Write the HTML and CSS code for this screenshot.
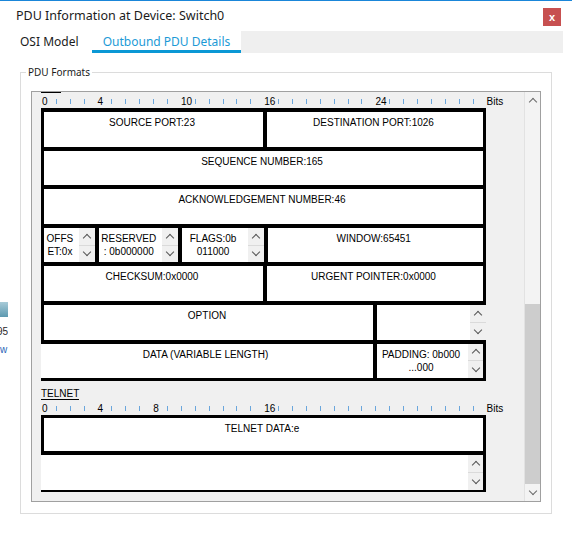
FILE: index.html
```html
<!DOCTYPE html>
<html lang="en">
<head>
    <meta charset="UTF-8">
    <meta name="viewport" content="width=device-width, initial-scale=1.0">
    <title>PDU Information at Device: Switch0</title>
    <link rel="stylesheet" href="styles.css">
</head>
<body>
    <!-- bit of the workspace showing behind the dialog -->
    <div class="behind">
        <div class="behind-icon"></div>
        <div class="behind-num">95</div>
        <div class="behind-link">w</div>
    </div>

    <div class="window">
        <div class="titlebar">
            <span class="title">PDU Information at Device: Switch0</span>
            <button class="close">x</button>
        </div>

        <div class="tabs">
            <div class="tab">OSI Model</div>
            <div class="tab active">Outbound PDU Details</div>
            <div class="tab-fill"></div>
        </div>

        <fieldset class="group">
            <legend>PDU Formats</legend>
            <div class="panel">
                <div class="panel-content">
                    <div class="pdu-name tcp">TCP</div>
                    <div class="ruler">
                        <span class="num">0</span><i></i><i></i><i></i><span class="num">4</span><i></i><i></i><i></i><i></i><i></i><span class="num">10</span><i></i><i></i><i></i><i></i><i></i><span class="num">16</span><i></i><i></i><i></i><i></i><i></i><i></i><i></i><span class="num">24</span><i></i><i></i><i></i><i></i><i></i><i></i><i></i><span class="bits">Bits</span>
                    </div>
                    <div class="pdu">
                        <div class="row">
                            <div class="cell first half-l"><div class="txt">SOURCE PORT:23</div></div>
                            <div class="cell last half-r"><div class="txt">DESTINATION PORT:1026</div></div>
                        </div>
                        <div class="row">
                            <div class="cell first last full"><div class="txt">SEQUENCE NUMBER:165</div></div>
                        </div>
                        <div class="row">
                            <div class="cell first last full"><div class="txt">ACKNOWLEDGEMENT NUMBER:46</div></div>
                        </div>
                        <div class="row">
                            <div class="cell first offset">
                                <div class="txt">OFFS<br>ET:0x</div>
                                <div class="spin"><span class="up"></span><span class="down"></span></div>
                            </div>
                            <div class="cell reserved">
                                <div class="txt">RESERVED<br>: 0b000000</div>
                                <div class="spin"><span class="up"></span><span class="down"></span></div>
                            </div>
                            <div class="cell flags">
                                <div class="txt">FLAGS:0b<br>011000</div>
                                <div class="spin"><span class="up"></span><span class="down"></span></div>
                            </div>
                            <div class="cell last half-r"><div class="txt">WINDOW:65451</div></div>
                        </div>
                        <div class="row">
                            <div class="cell first half-l"><div class="txt">CHECKSUM:0x0000</div></div>
                            <div class="cell last half-r"><div class="txt">URGENT POINTER:0x0000</div></div>
                        </div>
                        <div class="row">
                            <div class="cell first option"><div class="txt">OPTION</div></div>
                            <div class="cell tail">
                                <div class="txt"></div>
                                <div class="spin"><span class="up"></span><span class="down"></span></div>
                            </div>
                        </div>
                        <div class="row end">
                            <div class="cell open option"><div class="txt">DATA (VARIABLE LENGTH)</div></div>
                            <div class="cell last tail">
                                <div class="txt">PADDING: 0b000<br>...000</div>
                                <div class="spin"><span class="up"></span><span class="down"></span></div>
                            </div>
                        </div>
                    </div>

                    <div class="pdu-name">TELNET</div>
                    <div class="ruler">
                        <span class="num">0</span><i></i><i></i><i></i><span class="num">4</span><i></i><i></i><i></i><span class="num">8</span><i></i><i></i><i></i><i></i><i></i><i></i><i></i><span class="num">16</span><i></i><i></i><i></i><i></i><i></i><i></i><i></i><i></i><i></i><i></i><i></i><i></i><i></i><i></i><i></i><span class="bits">Bits</span>
                    </div>
                    <div class="pdu telnet">
                        <div class="row first-row">
                            <div class="cell first last full"><div class="txt">TELNET DATA:e</div></div>
                        </div>
                        <div class="row end thin">
                            <div class="cell open last full">
                                <div class="txt"></div>
                                <div class="spin"><span class="up"></span><span class="down"></span></div>
                            </div>
                        </div>
                    </div>
                </div>

                <div class="vscroll">
                    <div class="sb-btn up"></div>
                    <div class="sb-track"><div class="sb-thumb"></div></div>
                    <div class="sb-btn down"></div>
                </div>
            </div>
        </fieldset>
    </div>
</body>
</html>
```

FILE: styles.css
```css
:root { --ink: #1b1b1b; --line: #000; --panel: #f0f0f0; --accent: #1c9ad6; --accent-bar: #0b98d5; }
body { margin: 0; width: 572px; height: 534px; overflow: hidden; position: relative; background: #fff; font-family: "Noto Sans", sans-serif; color: var(--ink); }

.behind { position: absolute; left: 0; top: 302px; width: 8px; overflow: hidden; font: 10px/14px "Liberation Sans", Arial, sans-serif; }
.behind-icon { height: 15px; background: linear-gradient(#a8cbd8, #5d99b0); }
.behind-num { margin-top: 8px; text-align: right; white-space: nowrap; direction: rtl; color: #2a2a2a; }
.behind-link { margin-top: 4px; color: #2a66b8; }

.window { border-top: 1px solid #1a86d9; }
.titlebar { display: flex; height: 30px; padding: 0 11px 0 16px; }
.title { flex: 1; font-size: 12.5px; line-height: 30px; }
.close { width: 18px; height: 18px; margin-top: 7px; padding: 0; border: none; background: #c75050; color: #fff; font: bold 11px/16px "Liberation Sans", Arial, sans-serif; }

.tabs { display: flex; height: 22px; width: 555px; margin-left: 8px; }
.tab { height: 22px; box-sizing: border-box; padding-top: 2px; font-size: 12px; line-height: 17px; white-space: nowrap; }
.tab:first-child { width: 84px; padding-left: 12px; }
.tab.active { width: 149px; text-align: center; color: var(--accent); border-bottom: 3px solid var(--accent-bar); }
.tab-fill { flex: 1; background: #efefef; }

.group { width: 532px; box-sizing: border-box; min-width: 0; margin: 12px 0 0 20px; padding: 0 10px 11px; border: 1px solid #dcdcdc; }
.group legend { margin-left: -5px; padding: 0 2px; font-size: 10px; line-height: 14px; }

.panel { display: flex; height: 411px; margin-top: 12px; box-sizing: border-box; border: 1px solid #a0a0a0; background: var(--panel); overflow: hidden; }
.panel-content { flex: 1; padding-left: 9px; overflow: hidden; font: 10px/13px "Liberation Sans", Arial, sans-serif; color: #000; }

.pdu-name { width: fit-content; margin-top: 7px; line-height: 11px; border-bottom: 1px solid #000; }
.pdu-name.tcp { margin-top: -11px; }

.ruler { display: flex; height: 13px; margin-top: 2px; white-space: nowrap; }
.ruler .num, .ruler i { flex: 0 0 13.906px; box-sizing: border-box; }
.ruler .num { padding-left: 1px; }
.ruler i { position: relative; }
.ruler i::before { content: ""; position: absolute; left: 1px; top: 4px; width: 1px; height: 5px; background: #6aa6dc; }
.ruler .bits { padding-left: 1px; }

.pdu { width: 445px; }
.row { display: flex; height: 38.6px; box-sizing: border-box; border-top: 4px solid var(--line); }
.row.end { height: 41.6px; border-bottom: 3px solid var(--line); }
.telnet .first-row { height: 36px; border-top-width: 3px; }
.telnet .row.end { height: 41.3px; border-bottom-width: 2px; }

.cell { display: flex; box-sizing: border-box; background: #fff; border-left: 4px solid var(--line); }
.cell.first { border-left-width: 3px; }
.cell.open { border-left: none; }
.cell.last { border-right: 3px solid var(--line); }
.full { width: 445px; }
.half-l { width: 222px; }
.half-r { width: 223px; }
.offset { width: 54px; }
.reserved { width: 83px; }
.flags { width: 86px; }
.option { width: 332px; }
.tail { width: 113px; }

.txt { flex: 1; min-width: 0; padding: 4px 3px 0 0; text-align: center; white-space: nowrap; overflow: hidden; }

.spin { width: 16px; display: flex; flex-direction: column; background: var(--panel); }
.last .spin { width: 15px; }
.spin span { flex: 1; display: flex; align-items: center; justify-content: center; }
.spin span + span { border-top: 1px solid #dadada; }
.spin .up::before, .sb-btn.up::before { content: ""; width: 5px; height: 5px; margin-top: 3px; border-left: 1.5px solid #555; border-top: 1.5px solid #555; transform: rotate(45deg); }
.spin .down::before, .sb-btn.down::before { content: ""; width: 5px; height: 5px; margin-top: -3px; border-right: 1.5px solid #555; border-bottom: 1.5px solid #555; transform: rotate(45deg); }

.vscroll { width: 16px; display: flex; flex-direction: column; background: #f3f3f3; border-left: 1px solid #e2e2e2; box-sizing: border-box; }
.sb-btn { height: 17px; display: flex; align-items: center; justify-content: center; }
.sb-btn.up::before, .sb-btn.down::before { border-color: #6a6a6a; }
.sb-track { flex: 1; display: flex; flex-direction: column; justify-content: flex-end; }
.sb-thumb { height: 180px; background: #cdcdcd; }
```
